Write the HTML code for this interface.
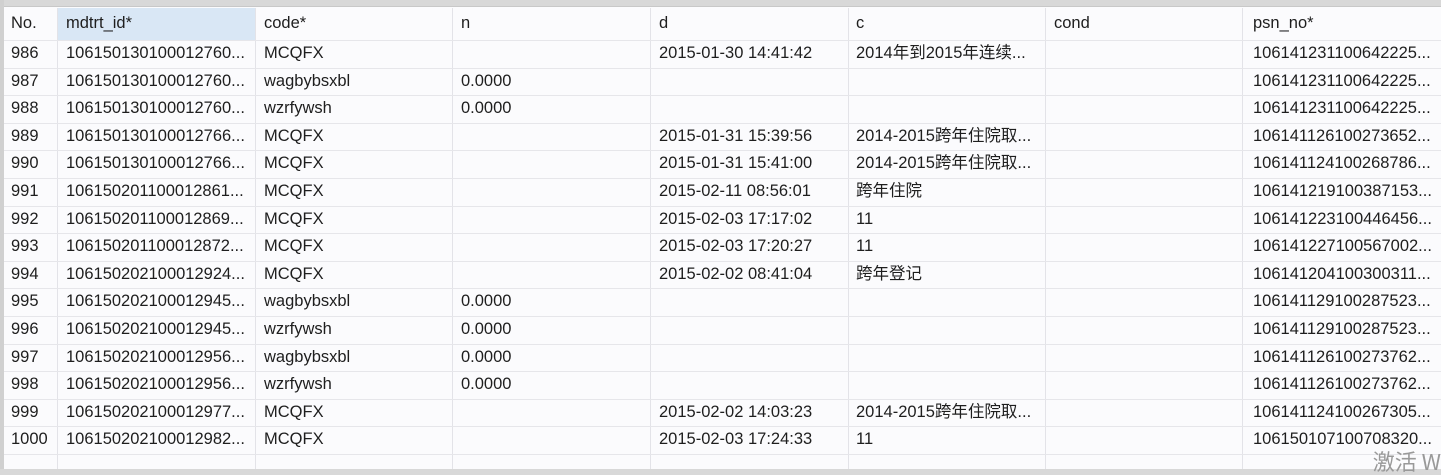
<!DOCTYPE html>
<html><head><meta charset="utf-8"><style>
*{margin:0;padding:0;box-sizing:border-box}
html,body{width:1441px;height:475px;overflow:hidden}
body{background:#fbfbfd;font-family:"Liberation Sans","Noto Sans CJK SC",sans-serif;font-size:16.5px;color:#1e1e1e;position:relative}
.top{position:absolute;left:0;top:0;width:1441px;height:7px;background:#d8d8d8;border-bottom:1px solid #c8c8c8}
.left{position:absolute;left:0;top:0;width:4px;height:475px;background:#d0d0d0}
.bot{position:absolute;left:0;top:469px;width:1441px;height:6px;background:#d8d8d8}
.hl{position:absolute;left:57px;top:8px;width:198px;height:32px;background:#d9e7f5}
.vl{position:absolute;top:8px;height:461px;width:1px;background:#e3e3e8}
.hr{position:absolute;left:4px;width:1437px;height:1px;background:#e6e6ea}
.c{position:absolute;white-space:nowrap;line-height:20px}
.wm{position:absolute;right:0;top:448px;font-size:22px;color:#999;font-family:"Noto Sans CJK SC",sans-serif;line-height:26px}
</style></head><body>
<div class="top"></div><div class="left"></div>
<div class="hl"></div>
<div id="g"></div>
<div class="bot"></div>
<div class="wm">激活 W</div>
<script>
var cols=[4,57,255,452,650,848,1045,1242];
var tx=[11,66,264,461,659,856,1054,1253];
var h='';
cols.slice(1).forEach(function(x){h+='<div class="vl" style="left:'+x+'px"></div>';});
var hdr=['No.','mdtrt_id*','code*','n','d','c','cond','psn_no*'];
hdr.forEach(function(t,i){h+='<div class="c" style="left:'+tx[i]+'px;top:13px">'+t+'</div>';});
var rows=[
['986','106150130100012760...','MCQFX','','2015-01-30 14:41:42','2014年到2015年连续...','','106141231100642225...'],
['987','106150130100012760...','wagbybsxbl','0.0000','','','','106141231100642225...'],
['988','106150130100012760...','wzrfywsh','0.0000','','','','106141231100642225...'],
['989','106150130100012766...','MCQFX','','2015-01-31 15:39:56','2014-2015跨年住院取...','','106141126100273652...'],
['990','106150130100012766...','MCQFX','','2015-01-31 15:41:00','2014-2015跨年住院取...','','106141124100268786...'],
['991','106150201100012861...','MCQFX','','2015-02-11 08:56:01','跨年住院','','106141219100387153...'],
['992','106150201100012869...','MCQFX','','2015-02-03 17:17:02','11','','106141223100446456...'],
['993','106150201100012872...','MCQFX','','2015-02-03 17:20:27','11','','106141227100567002...'],
['994','106150202100012924...','MCQFX','','2015-02-02 08:41:04','跨年登记','','106141204100300311...'],
['995','106150202100012945...','wagbybsxbl','0.0000','','','','106141129100287523...'],
['996','106150202100012945...','wzrfywsh','0.0000','','','','106141129100287523...'],
['997','106150202100012956...','wagbybsxbl','0.0000','','','','106141126100273762...'],
['998','106150202100012956...','wzrfywsh','0.0000','','','','106141126100273762...'],
['999','106150202100012977...','MCQFX','','2015-02-02 14:03:23','2014-2015跨年住院取...','','106141124100267305...'],
['1000','106150202100012982...','MCQFX','','2015-02-03 17:24:33','11','','106150107100708320...']];
var y0=40,p=27.6;
for(var r=0;r<=15;r++){h+='<div class="hr" style="top:'+Math.round(y0+r*p)+'px"></div>';}
rows.forEach(function(row,r){var y=Math.round(y0+r*p+3);row.forEach(function(t,i){if(t)h+='<div class="c" style="left:'+tx[i]+'px;top:'+y+'px">'+t+'</div>';});});
document.getElementById('g').innerHTML=h;
</script>
</body></html>
